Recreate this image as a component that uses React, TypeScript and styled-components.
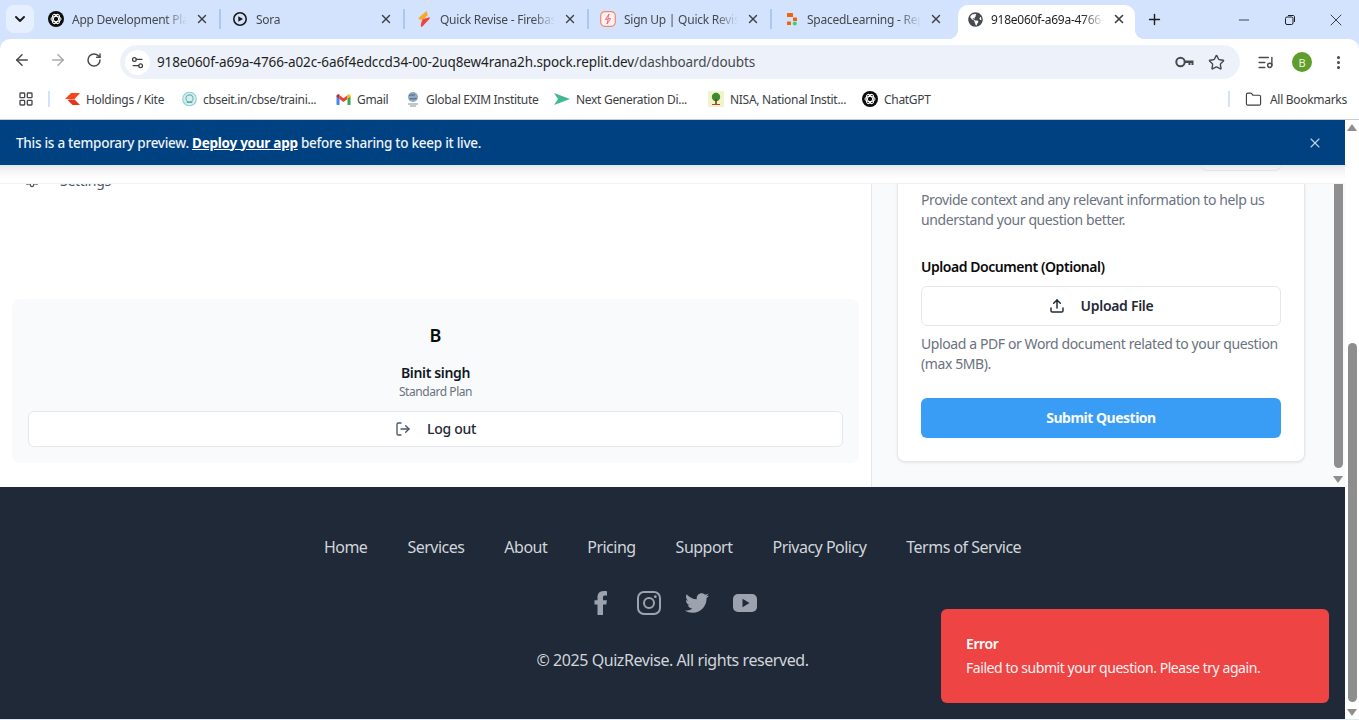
import React from "react";
import styled, { createGlobalStyle } from "styled-components";
import {
  ArrowLeft,
  ArrowRight,
  RotateCw,
  Settings2,
  Star,
  MoreVertical,
  Folder,
  LayoutGrid,
  X,
  Plus,
  Minus,
  ChevronDown,
  Settings,
  LogOut,
  Upload,
  ListMusic,
} from "lucide-react";
import { FaTwitter, FaGlobeAmericas } from "react-icons/fa";

const GlobalStyle = createGlobalStyle`
  html, body {
    margin: 0;
    padding: 0;
    width: 1359px;
    height: 720px;
    overflow: hidden;
    background: #fff;
    font-family: "Noto Sans", "Open Sans", sans-serif;
  }
  * { box-sizing: border-box; }
`;

const Window = styled.div`
  width: 1359px;
  height: 720px;
  display: flex;
  flex-direction: column;
  background: #d3e3fd;
`;

/* tab strip */
const TabStrip = styled.div`
  height: 39px;
  display: flex;
  align-items: flex-end;
  padding-left: 6px;
  position: relative;
`;

const TabSearch = styled.div`
  width: 28px;
  height: 28px;
  margin-bottom: 6px;
  margin-right: 3px;
  border-radius: 8px;
  background: #e6effd;
  display: flex;
  align-items: center;
  justify-content: center;
  color: #1f1f1f;
`;

const Tab = styled.div<{ $width: number; $sep?: boolean }>`
  width: ${(p) => p.$width}px;
  height: 34px;
  display: flex;
  align-items: center;
  padding: 0 12px 6px 11px;
  position: relative;
  font-size: 12px;
  letter-spacing: -0.25px;
  color: #45484c;
  &::after {
    content: "";
    display: ${(p) => (p.$sep ? "block" : "none")};
    position: absolute;
    right: 0;
    top: 4px;
    height: 20px;
    width: 2px;
    background: #a9c8f6;
  }
`;

const ActiveTab = styled.div`
  width: 177px;
  height: 34px;
  margin-left: 3px;
  padding: 0 9px 6px 9px;
  display: flex;
  align-items: center;
  position: relative;
  background: #fff;
  border-radius: 10px 10px 0 0;
  font-size: 12px;
  letter-spacing: -0.25px;
  color: #1f1f1f;
  &::before,
  &::after {
    content: "";
    position: absolute;
    bottom: 0;
    width: 10px;
    height: 10px;
  }
  &::before {
    left: -10px;
    background: radial-gradient(circle at 0 0, transparent 10px, #fff 10.5px);
  }
  &::after {
    right: -10px;
    background: radial-gradient(circle at 100% 0, transparent 10px, #fff 10.5px);
  }
`;

const Favicon = styled.span`
  width: 16px;
  height: 16px;
  flex: none;
  display: flex;
  align-items: center;
  justify-content: center;
  margin-right: 8px;
`;

const TabTitle = styled.span`
  flex: 1;
  min-width: 0;
  margin-right: 8px;
  white-space: nowrap;
  overflow: hidden;
  -webkit-mask-image: linear-gradient(to right, #000 calc(100% - 22px), transparent);
  mask-image: linear-gradient(to right, #000 calc(100% - 22px), transparent);
`;

const TabClose = styled(X)`
  flex: none;
  color: #3c4043;
`;

const NewTab = styled.div`
  width: 28px;
  height: 28px;
  margin: 0 0 6px 5px;
  display: flex;
  align-items: center;
  justify-content: center;
  color: #1f1f1f;
`;

const WindowControls = styled.div`
  margin-left: auto;
  height: 39px;
  align-self: flex-start;
  display: flex;
  align-items: center;
  color: #1f1f1f;
`;

const WindowButton = styled.div`
  width: 46px;
  display: flex;
  justify-content: center;
`;

/* toolbar */
const Toolbar = styled.div`
  height: 41px;
  background: #fff;
  border-radius: 10px 10px 0 0;
  display: flex;
  align-items: center;
  padding-left: 4px;
  position: relative;
`;

const NavIcon = styled.div<{ $muted?: boolean }>`
  width: 36px;
  display: flex;
  justify-content: center;
  color: ${(p) => (p.$muted ? "#a8abaf" : "#474a4d")};
`;

const Omnibox = styled.div`
  width: 1120px;
  height: 34px;
  margin: 5px 0 0 8px;
  border-radius: 17px;
  background: #edf2fa;
  display: flex;
  align-items: center;
  padding: 0 15px 0 5px;
`;

const SiteChip = styled.div`
  width: 25px;
  height: 25px;
  border-radius: 50%;
  background: #fff;
  display: flex;
  align-items: center;
  justify-content: center;
  color: #3c4043;
  margin-right: 7px;
`;

const Url = styled.div`
  flex: 1;
  font-size: 13.5px;
  letter-spacing: -0.11px;
  color: #1f1f1f;
  white-space: nowrap;
  span {
    color: #474a4d;
  }
`;

const OmniIcons = styled.div`
  display: flex;
  align-items: center;
  gap: 14px;
  color: #474a4d;
`;

const ToolbarRight = styled.div`
  display: flex;
  align-items: center;
  margin: 5px 0 0 17px;
  color: #474a4d;
`;

const Avatar = styled.div`
  width: 20px;
  height: 20px;
  margin: 0 18px 0 18px;
  border-radius: 50%;
  background: #5f9e2c;
  color: #e9f3dd;
  font-size: 11px;
  display: flex;
  align-items: center;
  justify-content: center;
`;

/* bookmarks */
const Bookmarks = styled.div`
  height: 40px;
  background: #fff;
  border-bottom: 1px solid #c9ccd0;
  display: flex;
  align-items: center;
  padding: 0 0 1px 18px;
  font-size: 12px;
  letter-spacing: -0.3px;
  color: #3c4043;
`;

const AppsIcon = styled(LayoutGrid)`
  color: #474a4d;
  flex: none;
`;

const BarSep = styled.div<{ $left: number; $right: number }>`
  width: 2px;
  height: 16px;
  background: #d3e3fd;
  margin: 0 ${(p) => p.$right}px 0 ${(p) => p.$left}px;
  flex: none;
`;

const Bookmark = styled.div<{ $width: number }>`
  width: ${(p) => p.$width}px;
  flex: none;
  display: flex;
  align-items: center;
  gap: 6px;
  white-space: nowrap;
  svg {
    flex: none;
  }
`;

const BookmarkSpacer = styled.div`
  flex: 1;
`;

const AllBookmarks = styled.div`
  width: 114px;
  flex: none;
  display: flex;
  align-items: center;
  gap: 8px;
  white-space: nowrap;
`;

/* web page */
const Viewport = styled.div`
  height: 600px;
  display: flex;
  background: #fff;
  border-bottom: 1px solid #dcebf3;
`;

const Page = styled.div`
  width: 1345px;
  display: flex;
  flex-direction: column;
  position: relative;
`;

const Banner = styled.div`
  height: 45px;
  flex: none;
  background: #004182;
  color: #eef3f8;
  font-size: 13.5px;
  font-weight: 500;
  letter-spacing: -0.26px;
  display: flex;
  align-items: center;
  justify-content: space-between;
  padding: 0 22px 0 16px;
  a {
    color: #fff;
    font-weight: 700;
    text-decoration: underline;
  }
`;

const BannerClose = styled(X)`
  color: #c4d4e6;
`;

const HeaderEdge = styled.div`
  height: 19px;
  flex: none;
  display: flex;
  justify-content: flex-end;
  padding-right: 64px;
  background: linear-gradient(#e6e7e8, #f7f7f7 7px, #fff 14px);
  border-bottom: 1px solid #f1f2f3;
`;

const HiddenButtonEdge = styled.div`
  width: 80px;
  height: 6px;
  border: 1px solid #e3e4e6;
  border-top: none;
  border-radius: 0 0 6px 6px;
`;

const Main = styled.div`
  height: 303px;
  flex: none;
  display: flex;
`;

const Sidebar = styled.aside`
  width: 871px;
  flex: none;
  display: flex;
  flex-direction: column;
  justify-content: space-between;
  background: #fff;
  padding: 0 12px 24px;
`;

const ClippedNav = styled.div`
  height: 6px;
  overflow: hidden;
`;

const NavRow = styled.div`
  height: 20px;
  margin-top: -14px;
  padding-left: 12px;
  display: flex;
  align-items: center;
  gap: 20px;
  font-size: 14px;
  letter-spacing: -0.3px;
  color: #4b5563;
`;

const UserCard = styled.div`
  height: 164px;
  padding: 16px;
  border-radius: 8px;
  background: #f9fafb;
  display: flex;
  flex-direction: column;
  align-items: center;
`;

const UserInitial = styled.div`
  width: 40px;
  height: 40px;
  font-size: 18px;
  font-weight: 600;
  color: #0a0a0a;
  display: flex;
  align-items: center;
  justify-content: center;
`;

const UserName = styled.div`
  margin-top: 8px;
  font-size: 14px;
  line-height: 20px;
  font-weight: 600;
  letter-spacing: -0.35px;
  color: #111827;
`;

const UserPlan = styled.div`
  margin-top: 1px;
  font-size: 12px;
  line-height: 16px;
  letter-spacing: -0.45px;
  color: #6b7280;
`;

const OutlineButton = styled.button<{ $height: number; $gap: number }>`
  width: 100%;
  height: ${(p) => p.$height}px;
  flex: none;
  border: 1px solid #e5e7eb;
  border-radius: 6px;
  background: #fff;
  font: inherit;
  font-size: 14px;
  font-weight: 600;
  letter-spacing: -0.3px;
  color: #1f2937;
  display: flex;
  align-items: center;
  justify-content: center;
  gap: ${(p) => p.$gap}px;
  padding: 0 0 2px;
  svg {
    margin-top: 2px;
  }
`;

const LogoutButton = styled(OutlineButton)`
  margin-top: 11px;
  font-weight: 500;
  svg {
    color: #4b5563;
  }
`;

const Panel = styled.section`
  flex: 1;
  display: flex;
  align-items: stretch;
  background: #f9fafb;
  border-left: 1px solid #e5e7eb;
  padding-left: 25px;
`;

const QuestionCard = styled.div`
  width: 408px;
  height: 278px;
  padding: 6px 23px 0;
  background: #fff;
  border: 1px solid #e5e7eb;
  border-top: none;
  border-radius: 0 0 8px 8px;
  box-shadow: 0 1px 3px rgba(0, 0, 0, 0.08);
`;

const Hint = styled.p`
  margin: 0;
  font-size: 14px;
  line-height: 20px;
  letter-spacing: -0.4px;
  color: #6b7280;
`;

const FieldLabel = styled.div`
  margin: 27px 0 9px;
  font-size: 14px;
  line-height: 20px;
  font-weight: 600;
  letter-spacing: -0.45px;
  color: #0a0a0a;
`;

const UploadHint = styled(Hint)`
  margin-top: 8px;
`;

const SubmitButton = styled.button`
  width: 100%;
  height: 40px;
  margin-top: 24px;
  border: none;
  border-radius: 6px;
  background: #399df5;
  color: #f8fafc;
  font: inherit;
  font-size: 14px;
  font-weight: 700;
  letter-spacing: -0.5px;
  padding: 0 0 2px;
`;

const Triangle = styled.div<{ $up?: boolean }>`
  width: 0;
  height: 0;
  flex: none;
  border-left: 5px solid transparent;
  border-right: 5px solid transparent;
  ${(p) =>
    p.$up ? "border-bottom: 7px solid #8e8e8e;" : "border-top: 7px solid #8e8e8e;"}
`;

const InnerScroll = styled.div`
  width: 10px;
  margin-left: 28px;
  display: flex;
  flex-direction: column;
  align-items: center;
`;

const InnerThumb = styled.div`
  width: 9px;
  height: 284px;
  flex: none;
  background: #8e8e8e;
  border-radius: 0 0 5px 5px;
  margin-bottom: 8px;
`;

/* footer */
const Footer = styled.footer`
  flex: 1;
  background: #1f2937;
  display: flex;
  flex-direction: column;
  align-items: center;
  padding-top: 48px;
`;

const FooterLinks = styled.nav`
  display: flex;
  gap: 40px;
  font-size: 16px;
  line-height: 24px;
  letter-spacing: -0.51px;
  color: #d1d5db;
`;

const Socials = styled.div`
  display: flex;
  gap: 24px;
  margin-top: 32px;
  color: #9ca3af;
  svg {
    display: block;
  }
`;

const Copyright = styled.div`
  margin-top: 33px;
  font-size: 16px;
  line-height: 24px;
  letter-spacing: -0.43px;
  color: #d1d5db;
`;

const Toast = styled.div`
  position: absolute;
  right: 16px;
  bottom: 16px;
  width: 388px;
  height: 94px;
  padding: 25px 25px;
  border-radius: 6px;
  background: #ef4444;
  color: #fef2f2;
  font-size: 13px;
  line-height: 20px;
`;

const ToastTitle = styled.div`
  font-size: 14px;
  font-weight: 600;
  letter-spacing: -0.4px;
  color: #fff;
  margin-bottom: 4px;
`;

const ToastBody = styled.div`
  font-size: 14px;
  letter-spacing: -0.44px;
`;

const PageScroll = styled.div`
  width: 14px;
  flex: none;
  display: flex;
  flex-direction: column;
  align-items: center;
  padding: 4px 0 3px;
  background: #fff;
`;

const PageThumb = styled.div`
  width: 9px;
  height: 359px;
  flex: none;
  margin: auto 0 7px;
  background: #8e8e8e;
  border-radius: 5px;
`;

/* logos and favicons */
const ChatGptMark = () => (
  <svg width="16" height="16" viewBox="0 0 16 16">
    <circle cx="8" cy="8" r="8" fill="#0d0d0d" />
    <g fill="none" stroke="#fff" strokeWidth="1">
      <ellipse cx="8" cy="8" rx="5" ry="2.6" />
      <ellipse cx="8" cy="8" rx="5" ry="2.6" transform="rotate(60 8 8)" />
      <ellipse cx="8" cy="8" rx="5" ry="2.6" transform="rotate(120 8 8)" />
    </g>
  </svg>
);

const SoraMark = () => (
  <svg width="16" height="16" viewBox="0 0 16 16">
    <circle cx="8" cy="8" r="6.2" fill="none" stroke="#1a1a1a" strokeWidth="1.6" />
    <path d="M6.3 5.2 11 8l-4.7 2.8z" fill="#1a1a1a" />
  </svg>
);

const BoltMark = () => (
  <svg width="16" height="16" viewBox="0 0 16 16">
    <path d="M10.500 0 3 6.600c-.7.7-.3 1.700.6 1.800l3.400.4 4.800-4.600z" fill="#f9a825" />
    <path d="M13.200 6.200c.7.1 1 .9.4 1.500L6.400 15.600c-.7.600-1.800.2-1.600-.8l.5-3.500 1.500-3z" fill="#f4433c" />
  </svg>
);

const SignUpMark = () => (
  <svg width="16" height="16" viewBox="0 0 16 16">
    <rect x="0.7" y="0.7" width="14.6" height="14.6" rx="4" fill="#fff3ee" stroke="#f08a6c" strokeWidth="1.2" />
    <path d="M9 3 5.4 8.4h2.8L7 13l3.6-5.4H7.8z" fill="none" stroke="#ea5f7d" strokeWidth="0.9" />
  </svg>
);

const SpacedMark = () => (
  <svg width="16" height="16" viewBox="0 0 16 16">
    <rect x="4" y="2" width="6" height="4" rx="0.6" fill="#f26207" />
    <rect x="10" y="6.500" width="4" height="3.500" rx="0.6" fill="#f26207" />
    <rect x="4" y="10.500" width="4" height="3.500" rx="0.6" fill="#f26207" />
    <circle cx="11.800" cy="12.500" r="2" fill="#3ecf6e" />
  </svg>
);

const KiteMark = () => (
  <svg width="15" height="12" viewBox="0 0 15 12">
    <path d="M0 6 6 0h9L9.6 6z" fill="#f6461a" />
    <path d="M3 7.5 7.5 12H15L9.6 6.6H3.9z" fill="#e5351a" />
  </svg>
);

const CbseMark = () => (
  <svg width="15" height="16" viewBox="0 0 16 16">
    <circle cx="8" cy="8" r="7.2" fill="#d7eeee" stroke="#8fcfd0" strokeWidth="1.2" />
    <circle cx="8" cy="7.4" r="3.8" fill="none" stroke="#68b5b8" strokeWidth="1.2" />
    <path d="M5 11.5h6" stroke="#4aa1a6" strokeWidth="1.2" />
  </svg>
);

const GmailMark = () => (
  <svg width="15" height="11" viewBox="0 0 14 11">
    <path d="M0 2v8c0 .6.4 1 1 1h2V4.5z" fill="#4285f4" />
    <path d="M14 2v8c0 .6-.4 1-1 1h-2V4.5z" fill="#34a853" />
    <path d="M3 5V1.2L7 4.2l4-3V5L7 8z" fill="#ea4335" />
    <path d="M0 2C0 .5 1.8-.4 3 .5v4.2L0 2.6z" fill="#c5221f" />
    <path d="M14 2c0-1.500-1.800-2.400-3-1.500v4.200l3-2.100z" fill="#fbbc04" />
  </svg>
);

const EximMark = () => (
  <svg width="14" height="16" viewBox="0 0 14 16">
    <circle cx="7" cy="6" r="5" fill="#8fa8bf" />
    <path d="M3 4.500c2-1.500 4 .5 6-1M3.500 8c2-1 4 .5 7-.5" stroke="#3f6385" fill="none" />
    <path d="M2 13h10M4 15h6" stroke="#7f93a6" strokeWidth="1.200" />
  </svg>
);

const NextGenMark = () => (
  <svg width="16" height="12" viewBox="0 0 16 12">
    <path d="M0 0 16 6 0 12 4 6z" fill="#3eb991" />
  </svg>
);

const NisaMark = () => (
  <svg width="16" height="16" viewBox="0 0 16 16">
    <rect width="16" height="16" rx="1" fill="#f2f3c9" />
    <circle cx="8" cy="6" r="4.200" fill="#3d8b2f" />
    <rect x="7.200" y="8" width="1.600" height="5.500" fill="#7b3f1d" />
    <path d="M4 13.500h8" stroke="#b9432d" strokeWidth="1" />
  </svg>
);

const KeyMark = () => (
  <svg width="19" height="12" viewBox="0 0 19 12">
    <circle cx="5.500" cy="6" r="4.200" fill="none" stroke="#474a4d" strokeWidth="2" />
    <path d="M9.500 4.500h9v4.500h-2V7h-1v2h-2V7H9.500z" fill="#474a4d" />
  </svg>
);

const FacebookMark = () => (
  <svg width="24" height="24" viewBox="0 0 24 24" fill="currentColor">
    <path d="M8.500 24V13.500H5.500V9.200h3V6.200C8.500 2.800 10.600 0 14.600 0c1.400 0 3 .2 3.400.3v4.300h-2.200c-1.400 0-1.800.8-1.800 1.900v2.700h3.900l-.6 4.300H14V24z" />
  </svg>
);

const InstagramMark = () => (
  <svg width="24" height="24" viewBox="0 0 24 24" fill="none" stroke="currentColor" strokeWidth="2">
    <rect x="1" y="1" width="22" height="22" rx="6" />
    <circle cx="12" cy="12" r="5" />
    <circle cx="18.300" cy="5.700" r="1.400" fill="currentColor" stroke="none" />
  </svg>
);

const YoutubeMark = () => (
  <svg width="24" height="24" viewBox="0 0 24 24">
    <rect y="3" width="24" height="18" rx="5" fill="currentColor" />
    <path d="M9.500 7.800 16.500 12l-7 4.200z" fill="#1f2937" />
  </svg>
);

const tabs = [
  { title: "App Development Plan", icon: <ChatGptMark />, width: 184, sep: true },
  { title: "Sora", icon: <SoraMark />, width: 184, sep: true },
  { title: "Quick Revise - Firebase", icon: <BoltMark />, width: 184, sep: true },
  { title: "Sign Up | Quick Revise", icon: <SignUpMark />, width: 183, sep: true },
  { title: "SpacedLearning - Replit", icon: <SpacedMark />, width: 183, sep: false },
];

const bookmarks = [
  { label: "Holdings / Kite", icon: <KiteMark />, width: 117 },
  { label: "cbseit.in/cbse/traini...", icon: <CbseMark />, width: 154 },
  { label: "Gmail", icon: <GmailMark />, width: 70 },
  { label: "Global EXIM Institute", icon: <EximMark />, width: 148 },
  { label: "Next Generation Di...", icon: <NextGenMark />, width: 154 },
  { label: "NISA, National Instit...", icon: <NisaMark />, width: 154 },
  { label: "ChatGPT", icon: <ChatGptMark />, width: 80 },
];

const footerLinks = ["Home", "Services", "About", "Pricing", "Support", "Privacy Policy", "Terms of Service"];

export default function App() {
  return (
    <>
      <GlobalStyle />
      <Window>
        <TabStrip>
          <TabSearch>
            <ChevronDown size={16} strokeWidth={3} />
          </TabSearch>
          {tabs.map((tab) => (
            <Tab key={tab.title} $width={tab.width} $sep={tab.sep}>
              <Favicon>{tab.icon}</Favicon>
              <TabTitle>{tab.title}</TabTitle>
              <TabClose size={14} strokeWidth={2.4} />
            </Tab>
          ))}
          <ActiveTab>
            <Favicon>
              <FaGlobeAmericas size={15} color="#474a4d" />
            </Favicon>
            <TabTitle>918e060f-a69a-4766-a02c</TabTitle>
            <TabClose size={14} strokeWidth={2.8} />
          </ActiveTab>
          <NewTab>
            <Plus size={17} strokeWidth={2} />
          </NewTab>
          <WindowControls>
            <WindowButton>
              <Minus size={16} strokeWidth={1.2} />
            </WindowButton>
            <WindowButton>
              <svg width="12" height="12" viewBox="0 0 12 12" fill="none" stroke="#1f1f1f">
                <rect x="1.500" y="3" width="7.500" height="7.500" rx="1.500" />
                <path d="M4 1.500h5c1 0 1.500.5 1.500 1.500v5" />
              </svg>
            </WindowButton>
            <WindowButton>
              <X size={20} strokeWidth={1} />
            </WindowButton>
          </WindowControls>
        </TabStrip>
        <Toolbar>
          <NavIcon>
            <ArrowLeft size={18} />
          </NavIcon>
          <NavIcon $muted>
            <ArrowRight size={18} />
          </NavIcon>
          <NavIcon>
            <RotateCw size={16} strokeWidth={2.2} />
          </NavIcon>
          <Omnibox>
            <SiteChip>
              <Settings2 size={15} />
            </SiteChip>
            <Url>
              918e060f-a69a-4766-a02c-6a6f4edccd34-00-2uq8ew4rana2h.spock.replit.dev<span>/dashboard/doubts</span>
            </Url>
            <OmniIcons>
              <KeyMark />
              <Star size={17} strokeWidth={2} />
            </OmniIcons>
          </Omnibox>
          <ToolbarRight>
            <ListMusic size={17} />
            <Avatar>B</Avatar>
            <MoreVertical size={17} strokeWidth={2.4} />
          </ToolbarRight>
        </Toolbar>
        <Bookmarks>
          <AppsIcon size={16} strokeWidth={2} />
          <BarSep $left={14} $right={15} />
          {bookmarks.map((b) => (
            <Bookmark key={b.label} $width={b.width}>
              {b.icon}
              {b.label}
            </Bookmark>
          ))}
          <BookmarkSpacer />
          <BarSep $left={0} $right={15} />
          <AllBookmarks>
            <Folder size={17} strokeWidth={1.600} />
            All Bookmarks
          </AllBookmarks>
        </Bookmarks>
        <Viewport>
          <Page>
            <Banner>
              <span>
                This is a temporary preview. <a>Deploy your app</a> before sharing to keep it live.
              </span>
              <BannerClose size={16} strokeWidth={1.600} />
            </Banner>
            <HeaderEdge>
              <HiddenButtonEdge />
            </HeaderEdge>
            <Main>
              <Sidebar>
                <ClippedNav>
                  <NavRow>
                    <Settings size={16} />
                    Settings
                  </NavRow>
                </ClippedNav>
                <UserCard>
                  <UserInitial>B</UserInitial>
                  <UserName>Binit singh</UserName>
                  <UserPlan>Standard Plan</UserPlan>
                  <LogoutButton $height={36} $gap={16}>
                    <LogOut size={16} />
                    Log out
                  </LogoutButton>
                </UserCard>
              </Sidebar>
              <Panel>
                <QuestionCard>
                  <Hint>
                    Provide context and any relevant information to help us understand your question better.
                  </Hint>
                  <FieldLabel>Upload Document (Optional)</FieldLabel>
                  <OutlineButton $height={40} $gap={16}>
                    <Upload size={16} strokeWidth={2.200} />
                    Upload File
                  </OutlineButton>
                  <UploadHint>Upload a PDF or Word document related to your question (max 5MB).</UploadHint>
                  <SubmitButton>Submit Question</SubmitButton>
                </QuestionCard>
                <InnerScroll>
                  <InnerThumb />
                  <Triangle />
                </InnerScroll>
              </Panel>
            </Main>
            <Footer>
              <FooterLinks>
                {footerLinks.map((l) => (
                  <span key={l}>{l}</span>
                ))}
              </FooterLinks>
              <Socials>
                <FacebookMark />
                <InstagramMark />
                <FaTwitter size={24} />
                <YoutubeMark />
              </Socials>
              <Copyright>© 2025 QuizRevise. All rights reserved.</Copyright>
            </Footer>
            <Toast>
              <ToastTitle>Error</ToastTitle>
              <ToastBody>Failed to submit your question. Please try again.</ToastBody>
            </Toast>
          </Page>
          <PageScroll>
            <Triangle $up />
            <PageThumb />
            <Triangle />
          </PageScroll>
        </Viewport>
      </Window>
    </>
  );
}
